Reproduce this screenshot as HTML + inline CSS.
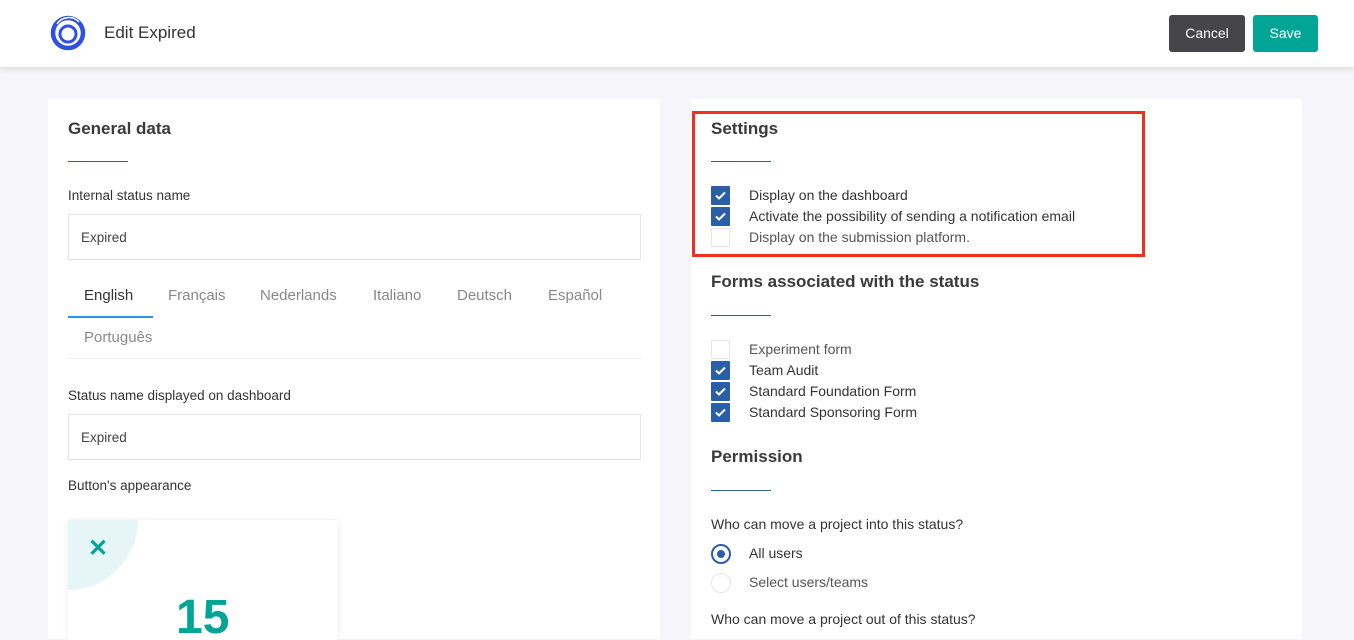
<!DOCTYPE html>
<html><head><meta charset="utf-8"><style>
*{box-sizing:border-box;margin:0;padding:0}
body{width:1354px;height:631px;overflow:hidden;background:#f6f6fa;font-family:"Liberation Sans",sans-serif;color:#333;position:relative}
.a{position:absolute;white-space:nowrap}
.hdr{position:absolute;left:0;top:0;width:1354px;height:67px;background:#fff;box-shadow:0 2px 6px rgba(0,0,0,.12)}
.card{position:absolute;top:99px;background:#fff;height:540px}
.h{font-size:17px;font-weight:bold;color:#3a3a3a}
.ul{position:absolute;width:60px;height:1px;background:#2a5fa0}
.lbl{font-size:13.5px;color:#333}
.inp{position:absolute;left:68px;width:573px;height:46px;border:1px solid #e3e3e8;font-size:13.5px;padding:15px 12px;color:#444}
.tab{font-size:15px;color:#888}
.cb{position:absolute;width:19px;height:19px;background:#2a5fa8;border-radius:1px}
.cb.off{background:#fff;border:1px solid #e6e6ea}
.cb svg{position:absolute;left:4px;top:5px}
.t{font-size:14px;color:#333}
</style></head><body>
<div class="hdr"></div>
<svg class="a" style="left:49px;top:14px" width="38" height="38" viewBox="0 0 38 38">
<circle cx="19" cy="19" r="15" fill="none" stroke="#2f50e0" stroke-width="4.5"/>
<circle cx="19" cy="20" r="8" fill="none" stroke="#2f50e0" stroke-width="3"/>
<path d="M8 10 A14 14 0 0 1 30 8" fill="none" stroke="#fff" stroke-width="1.5"/>
<path d="M11 14 A10 10 0 0 1 27 12" fill="none" stroke="#fff" stroke-width="1.5"/>
</svg>
<div class="a" style="left:104px;top:23px;font-size:17px;color:#333">Edit Expired</div>
<div class="a" style="left:1169px;top:15px;width:76px;height:37px;background:#464547;border-radius:3px;color:#fff;font-size:14px;text-align:center;line-height:37px">Cancel</div>
<div class="a" style="left:1253px;top:15px;width:65px;height:37px;background:#00a596;border-radius:3px;color:#fff;font-size:14px;text-align:center;line-height:37px">Save</div>

<div class="card" style="left:48px;width:612px"></div>
<div class="a h" style="left:68px;top:119px">General data</div>
<div class="ul" style="left:68px;top:161px"></div>
<div class="a lbl" style="left:68px;top:188px">Internal status name</div>
<div class="inp" style="top:214px">Expired</div>
<div class="a tab" style="left:84px;top:287px;color:#333">English</div>
<div class="a" style="left:68px;top:316px;width:85px;height:2px;background:#2196f3"></div>
<div class="a tab" style="left:168px;top:287px">Français</div>
<div class="a tab" style="left:260px;top:287px">Nederlands</div>
<div class="a tab" style="left:373px;top:287px">Italiano</div>
<div class="a tab" style="left:457px;top:287px">Deutsch</div>
<div class="a tab" style="left:548px;top:287px">Español</div>
<div class="a tab" style="left:84px;top:329px">Português</div>
<div class="a" style="left:68px;top:358px;width:573px;height:1px;background:#eee"></div>
<div class="a lbl" style="left:68px;top:388px">Status name displayed on dashboard</div>
<div class="inp" style="top:414px">Expired</div>
<div class="a lbl" style="left:68px;top:478px">Button's appearance</div>
<div class="a" style="left:68px;top:520px;width:270px;height:120px;background:#fff;box-shadow:0 0 6px rgba(0,0,0,.08);overflow:hidden">
<div class="a" style="left:-70px;top:-70px;width:140px;height:140px;border-radius:50%;background:#e6f5f5"></div>
<div class="a" style="left:20px;top:14px;font-size:24px;color:#00a596;font-weight:bold">✕</div>
<div class="a" style="left:108px;top:70px;font-size:48px;font-weight:bold;color:#00a596">15</div>
</div>

<div class="card" style="left:691px;width:611px"></div>
<div class="a h" style="left:711px;top:119px">Settings</div>
<div class="ul" style="left:711px;top:161px"></div>
<div class="cb" style="left:711px;top:186px"><svg width="11" height="9" viewBox="0 0 11 9"><path d="M1 4.5L4 7.5L10 1.5" stroke="#fff" stroke-width="2" fill="none"/></svg></div>
<div class="a t" style="left:749px;top:187px">Display on the dashboard</div>
<div class="cb" style="left:711px;top:207px"><svg width="11" height="9" viewBox="0 0 11 9"><path d="M1 4.5L4 7.5L10 1.5" stroke="#fff" stroke-width="2" fill="none"/></svg></div>
<div class="a t" style="left:749px;top:208px">Activate the possibility of sending a notification email</div>
<div class="cb off" style="left:711px;top:228px"></div>
<div class="a t" style="left:749px;top:229px;color:#555">Display on the submission platform.</div>
<div class="a" style="left:692px;top:111px;width:453px;height:146px;border:3px solid #f0301e"></div>

<div class="a h" style="left:711px;top:272px">Forms associated with the status</div>
<div class="ul" style="left:711px;top:315px"></div>
<div class="cb off" style="left:711px;top:340px"></div>
<div class="a t" style="left:749px;top:341px;color:#555">Experiment form</div>
<div class="cb" style="left:711px;top:361px"><svg width="11" height="9" viewBox="0 0 11 9"><path d="M1 4.5L4 7.5L10 1.5" stroke="#fff" stroke-width="2" fill="none"/></svg></div>
<div class="a t" style="left:749px;top:362px">Team Audit</div>
<div class="cb" style="left:711px;top:382px"><svg width="11" height="9" viewBox="0 0 11 9"><path d="M1 4.5L4 7.5L10 1.5" stroke="#fff" stroke-width="2" fill="none"/></svg></div>
<div class="a t" style="left:749px;top:383px">Standard Foundation Form</div>
<div class="cb" style="left:711px;top:403px"><svg width="11" height="9" viewBox="0 0 11 9"><path d="M1 4.5L4 7.5L10 1.5" stroke="#fff" stroke-width="2" fill="none"/></svg></div>
<div class="a t" style="left:749px;top:404px">Standard Sponsoring Form</div>

<div class="a h" style="left:711px;top:447px">Permission</div>
<div class="ul" style="left:711px;top:490px"></div>
<div class="a t" style="left:711px;top:516px">Who can move a project into this status?</div>
<div class="a" style="left:711px;top:544px;width:20px;height:20px;border-radius:50%;border:2px solid #2a5fa8"><div class="a" style="left:4px;top:4px;width:8px;height:8px;border-radius:50%;background:#2a5fa8"></div></div>
<div class="a t" style="left:749px;top:545px">All users</div>
<div class="a" style="left:711px;top:573px;width:20px;height:20px;border-radius:50%;border:1px solid #e6e6ea"></div>
<div class="a t" style="left:749px;top:574px;color:#555">Select users/teams</div>
<div class="a t" style="left:711px;top:611px">Who can move a project out of this status?</div>
</body></html>
